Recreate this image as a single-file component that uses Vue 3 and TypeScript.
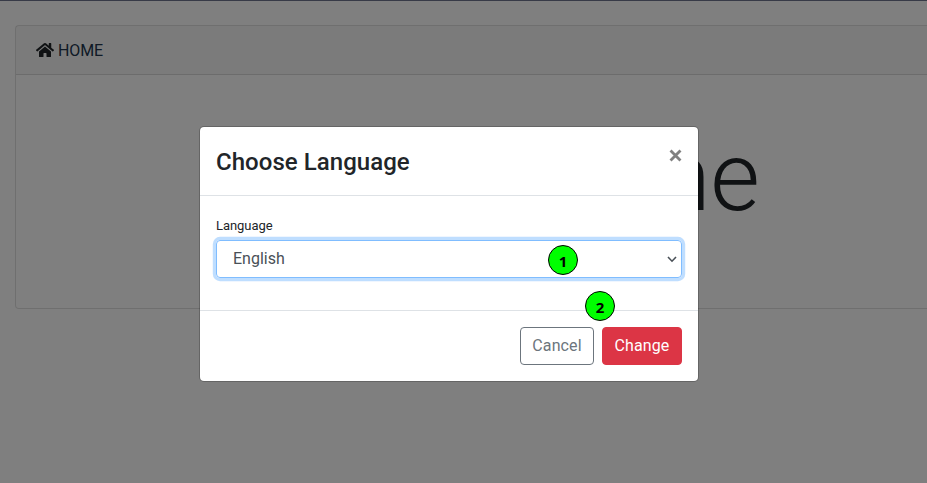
<script setup lang="ts">
import { ref } from 'vue'

interface Marker {
  label: string
  name: string
}

const language = ref<string>('English')
const markers: Marker[] = [
  { label: '1', name: 'first' },
  { label: '2', name: 'second' },
]
</script>

<template>
  <div class="page">
    <main class="content">
      <section class="card">
        <header class="card-header">
          <svg class="home-icon" viewBox="0 0 576 512" aria-hidden="true">
            <path d="M280.37 148.26L96 300.11V464a16 16 0 0 0 16 16l112.06-.29a16 16 0 0 0 15.92-16V368a16 16 0 0 1 16-16h64a16 16 0 0 1 16 16v95.64a16 16 0 0 0 16 16.05L464 480a16 16 0 0 0 16-16V300L295.67 148.26a12.19 12.19 0 0 0-15.3 0zM571.6 251.47L488 182.56V44.05a12 12 0 0 0-12-12h-56a12 12 0 0 0-12 12v72.61L318.47 43a48 48 0 0 0-61 0L4.34 251.47a12 12 0 0 0-1.6 16.9l25.5 31A12 12 0 0 0 45.15 301l235.22-193.74a12.19 12.19 0 0 1 15.3 0L530.9 301a12 12 0 0 0 16.9-1.6l25.5-31a12 12 0 0 0-1.7-16.93z" />
          </svg>
          <span class="crumb">HOME</span>
        </header>
        <div class="card-body">
          <h1 class="display">Welcome</h1>
        </div>
      </section>
    </main>

    <div class="backdrop">
      <div class="modal" role="dialog" aria-modal="true">
        <header class="modal-header">
          <h5 class="modal-title">Choose Language</h5>
          <button class="close" type="button" aria-label="Close">
            <svg viewBox="0 0 12 12" aria-hidden="true"><path d="M1.4 1.4 10.6 10.6M10.6 1.4 1.4 10.6" /></svg>
          </button>
        </header>
        <div class="modal-body">
          <div class="label">Language</div>
          <div class="select" role="combobox" tabindex="0">
            <span>{{ language }}</span>
            <svg class="chevron" viewBox="0 0 10 7" aria-hidden="true"><path d="M1 1 5 5.2 9 1" /></svg>
          </div>
        </div>
        <footer class="modal-footer">
          <button class="btn cancel" type="button">Cancel</button>
          <button class="btn change" type="button">Change</button>
        </footer>
        <span v-for="m in markers" :key="m.label" class="marker" :class="m.name">{{ m.label }}</span>
      </div>
    </div>
  </div>
</template>

<style>
body {
  margin: 0;
  overflow: hidden;
}
</style>

<style scoped>
* {
  box-sizing: border-box;
}
.page {
  position: relative;
  width: 100%;
  height: 483px;
  overflow: hidden;
  background: #fff;
  border-top: 1px solid #373a47;
  font-family: Roboto, sans-serif;
  font-size: 16px;
  line-height: 24px;
  color: #212529;
}
.content {
  padding: 24px 0 0 15px;
}
.card {
  height: 284px;
  border: 1px solid rgba(0, 0, 0, 0.125);
  border-right: 0;
  border-radius: 4px 0 0 4px;
}
.card-header {
  display: flex;
  align-items: center;
  height: 49px;
  padding: 1px 20px 0;
  background: rgba(0, 0, 0, 0.03);
  border-bottom: 1px solid rgba(0, 0, 0, 0.125);
}
.home-icon {
  width: 18px;
  height: 16px;
  margin: 0 4px 1px 0;
  fill: #212529;
}
.crumb {
  color: #20354d;
  letter-spacing: -0.1px;
}
.card-body {
  display: flex;
  justify-content: flex-end;
  padding: 45px 167px 0 0;
}
.display {
  margin: 0;
  font-size: 96px;
  font-weight: 300;
  line-height: 115px;
}
.backdrop {
  position: absolute;
  inset: 0;
  padding: 125px 0 0 199px;
  background: rgba(0, 0, 0, 0.5);
}
.modal {
  position: relative;
  width: 500px;
  background: #fff;
  background-clip: padding-box;
  border: 1px solid rgba(0, 0, 0, 0.2);
  border-radius: 5px;
}
.modal-header {
  display: flex;
  justify-content: space-between;
  align-items: flex-start;
  padding: 16px;
  border-bottom: 1px solid #dee2e6;
}
.modal-title {
  margin: 0;
  padding-top: 2px;
  font-size: 24px;
  font-weight: 500;
  line-height: 34px;
  letter-spacing: 0.05px;
}
.close {
  display: flex;
  margin: 6px 0 0;
  padding: 0;
  border: 0;
  background: none;
}
.close svg {
  width: 13px;
  height: 13px;
  fill: none;
  stroke: #808080;
  stroke-width: 2.6;
}
.modal-body {
  height: 114px;
  padding: 16px;
}
.label {
  height: 28px;
  font-size: 13px;
  line-height: 28px;
  letter-spacing: -0.05px;
}
.select {
  display: flex;
  align-items: center;
  justify-content: space-between;
  height: 38px;
  padding: 0 4px 0 16px;
  border: 1px solid #80bdff;
  border-radius: 4px;
  box-shadow: 0 0 0 3.2px rgba(0, 123, 255, 0.25);
  color: #495057;
}
.chevron {
  width: 10px;
  height: 7px;
  fill: none;
  stroke: #495057;
  stroke-width: 1.6;
}
.modal-footer {
  display: flex;
  justify-content: flex-end;
  gap: 8px;
  padding: 16px;
  border-top: 1px solid #dee2e6;
}
.btn {
  height: 38px;
  padding: 0;
  border: 1px solid;
  border-radius: 4px;
  font: inherit;
  letter-spacing: 0.1px;
}
.cancel {
  width: 74px;
  color: #6c757d;
  background: #fff;
  border-color: #6c757d;
}
.change {
  width: 80px;
  color: #fff;
  background: #dc3545;
  border-color: #dc3545;
}
.marker {
  position: absolute;
  width: 30px;
  height: 30px;
  border: 1px solid #000;
  border-radius: 50%;
  background: #0f0;
  color: #000;
  font: bold 15px/30px "Noto Sans", sans-serif;
  text-align: center;
}
.first {
  left: 348px;
  top: 118px;
}
.second {
  left: 385px;
  top: 164px;
}
</style>
